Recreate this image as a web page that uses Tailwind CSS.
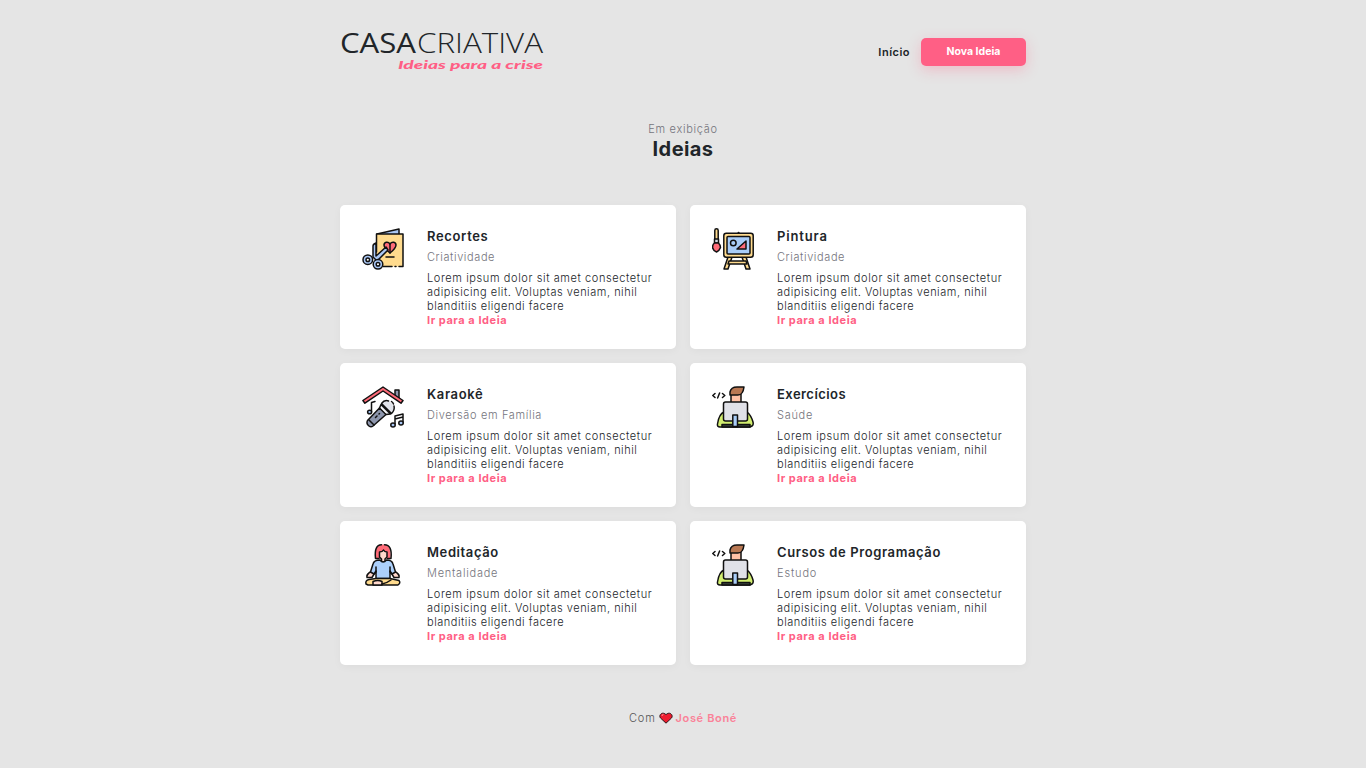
<!DOCTYPE html>
<html lang="pt-BR">
<head>
<meta charset="utf-8">
<title>Casa Criativa</title>
<script src="https://cdn.jsdelivr.net/npm/@tailwindcss/browser@4"></script>
</head>
<body class="h-screen overflow-hidden bg-[#e5e5e5] font-['Inter',sans-serif] text-[11px] leading-[14px] text-[#212529]">
<svg class="hidden">
  <defs>
    <symbol id="recortes" viewBox="0 0 42 42">
      <g stroke="#111" stroke-width="1.5" stroke-linejoin="round" stroke-linecap="round">
        <path fill="#a9c7f5" d="M15 6 37 1v6"/>
        <path fill="#ffdb8e" stroke="none" d="M14.500 6h26.500v32.500H14.500z"/>
        <path fill="none" d="M14.500 24V6H41v32.500h-4m-3 0h-1m-3 0H21"/>
        <path fill="#ff6b78" d="M28 25c-5-4-6-6-6-8 0-3 4-4 6-1 2-3 6-2 6 1 0 2-1 4-6 8z"/>
        <path d="M28 16v9M24 29h8"/>
        <path fill="#a9c7f5" d="M14 32 11 29V18q0-2 3-3v13l10-9 2 3-12 12z"/>
        <circle cx="5.800" cy="31.700" r="4.800" fill="#a9c7f5"/><circle cx="5.800" cy="31.700" r="1.800" fill="#fff"/>
        <circle cx="16" cy="36.300" r="4.800" fill="#a9c7f5"/><circle cx="16" cy="36.300" r="1.800" fill="#fff"/>
      </g>
    </symbol>
    <symbol id="pintura" viewBox="0 0 42 42">
      <g stroke="#111" stroke-width="1.500" stroke-linejoin="round" stroke-linecap="round">
        <path fill="#ffdb8e" d="M2.800 13V2.500a1.700 1.700 0 0 1 3.400 0V13z"/>
        <path fill="#d8dce6" d="M2.500 11h4v4h-4z"/>
        <path fill="#ff6b78" d="M2.500 15h4q2 2 2 4.500-1 3-4 4.500-3-1-4-4.500 0-3 2-4.500z"/>
        <path fill="#ffdb8e" d="M16 29l-4 12h4l4-12m14 0 4 12h-4l-4-12"/>
        <path fill="#ffdb8e" d="M17 33h17l1 3H16z"/>
        <rect x="11.800" y="5.300" width="29.400" height="24" rx="2.500" fill="#ffdb8e"/>
        <path d="M26.500 4.800h.1" stroke-width="2"/>
        <rect x="15" y="8.500" width="23" height="17.500" rx="1" fill="#a9cdf8"/>
        <circle cx="21.300" cy="15" r="2.800" fill="#a9cdf8"/>
        <path fill="#ff6b78" d="M25 21h9v-8z"/>
      </g>
    </symbol>
    <symbol id="karaoke" viewBox="0 0 42 42">
      <g stroke="#111" stroke-width="1.500" stroke-linejoin="round" stroke-linecap="round">
        <path fill="#8d96ad" d="M33 11V4h4v10z"/>
        <path fill="#ff6b78" d="M21 1 .9 14.500l2 2.700L21 5l18 12.200 2-2.700z"/>
        <path fill="#8d96ad" d="m17.500 22 6.500 6.500L11 40q-2 1.500-4 0l-1.500-1.500q-1-2 0-4z"/>
        <path fill="none" d="m7 34 5 5"/>
        <path d="m13.500 31.500 1.500-1.500m2-2 .5-.5"/>
        <path fill="#e1e3ea" stroke="none" d="M18.500 20q1.500-5 7-5 5 1 6 7-.5 5-5 6.500z"/>
        <path fill="none" d="M17.500 22 19 18.500l9.500 9.500-4.500.5M19.500 17.500q3-4 7-2.500M32 20q1 4-2.500 7.500l-9.500-9.500M29.500 15.500q1.500 1 2 2.500M9.500 26v-9.500l3.500-1"/>
        <ellipse cx="7.600" cy="26" rx="2" ry="1.800" fill="#a9c7f5"/>
        <path fill="none" d="M33 38v-8l8-2v9m-8-4 8-2"/>
        <ellipse cx="31" cy="39" rx="2.200" ry="2" fill="#a9c7f5"/><ellipse cx="39" cy="37" rx="2.200" ry="2" fill="#a9c7f5"/>
      </g>
    </symbol>
    <symbol id="codigo" viewBox="0 0 42 42">
      <g stroke="#111" stroke-width="1.500" stroke-linejoin="round" stroke-linecap="round">
        <path fill="none" d="M3 7.500.8 9.500 3 11.500M10.500 7.500l2.300 2-2.300 2M7.600 7l-2 5"/>
        <path fill="#d2ee70" d="M12 26q-5 2-6.500 12Q5 41 8 41h30q4-1 3-5-2-7-6-10z"/>
        <path fill="#39433b" d="M10 38.500h28V41H10z"/>
        <path fill="#ffc1a6" d="M19 7h10v10H19z"/>
        <path fill="#b97853" d="M18 9V6q1-5 7-5h7q-1 8-6 8z"/>
        <rect x="11.500" y="16" width="24" height="19" rx="2" fill="#e0e1e8"/>
        <path fill="#a9cdf8" d="M20.800 29h4.700v11.500h-4.700z"/>
      </g>
    </symbol>
    <symbol id="meditacao" viewBox="0 0 42 42">
      <g stroke="#111" stroke-width="1.500" stroke-linejoin="round" stroke-linecap="round">
        <path fill="#ff6b78" stroke="none" d="M14 14.500q-2-14 7-14t7.500 14H14z"/>
        <path fill="none" d="M17 14.500h-3.500Q12 1 19.500.8m3 0Q30.500 1 29 14.500h-3.500"/>
        <path fill="#ffd8cc" d="M17.500 8q3 0 4-2 1 2 3.500 2v5l-2 2v3h-3.500v-3l-2-2z"/>
        <path fill="#ffd8cc" d="M9 27.500q-5 3-4 6h5l3-5m20-1q5 3 4 6h-5l-3-5"/>
        <path fill="#acd0fb" d="M18 16q3 4 6.500 0 5.500 0 6.500 4l2.500 8-3.500 2-2-3v7.500H14V27l-2 3-3.500-2 2.500-8q1-4 7-4z"/>
        <path fill="none" d="M14 23v5m14-5v5"/>
        <path fill="#ffdb8e" d="M14 34.500 7 35.500q-4 1-3 4.500l2 1h30q3-2 1-4.500l-9-2z"/>
        <path fill="#ffd8cc" d="M11 37.500q5-2 9 0V41h-9z"/>
        <path fill="none" d="M20 40q5-1 9-4"/>
      </g>
    </symbol>
  </defs>
</svg>
<div class="mx-auto flex w-[686px] flex-col">
  <header class="flex h-[104px] justify-between">
    <svg class="mt-[20px] h-[60px] w-[212px]" viewBox="0 -8 212 60">
      <text x="0" y="25" font-family="Open Sans" font-size="27" font-weight="500" fill="#212529" textLength="76" lengthAdjust="spacingAndGlyphs">CASA</text>
      <text x="77" y="25" font-family="Open Sans" font-size="27" font-weight="300" fill="#212529" textLength="126" lengthAdjust="spacingAndGlyphs">CRIATIVA</text>
      <text x="58" y="41" font-family="Lato" font-size="12" font-style="italic" font-weight="900" fill="#ff5f85" textLength="145" lengthAdjust="spacingAndGlyphs">Ideias para a crise</text>
    </svg>
    <nav class="mt-[38px] flex h-7 items-center gap-[11px] font-semibold">
      <a class="tracking-[0.5px]">Início</a>
      <a class="flex h-7 w-[105px] items-center justify-center rounded-[5px] bg-[#ff5f85] pb-px text-[10.500px] font-bold text-white shadow-[0_4px_14px_rgba(255,95,133,0.3)]">Nova Ideia</a>
    </nav>
  </header>
  <section class="mt-[18px] h-[83px] text-center">
    <p class="font-light tracking-[0.7px] text-[#74747c]">Em exibição</p>
    <h1 class="text-[20px] leading-[26px] font-bold tracking-[0.4px]">Ideias</h1>
  </section>
  <main id="cards" class="grid grid-cols-2 gap-[14px]"></main>
  <footer class="mt-[46px] flex h-[14px] justify-center gap-[3px]">
    <span class="font-light tracking-[0.8px] text-[#555]">Com</span>
    <svg class="mt-px h-3 w-[14px]" viewBox="0 0 14 12"><path d="M7 11.200 1.500 6C-.8 3 3.500-1 7 2.700 10.500-1 14.800 3 12.500 6z" fill="#ee1c2e" stroke="#27171a" stroke-width="1"/><path d="M3 4q0-1.500 1.500-1.700" fill="none" stroke="#ff8d96"/></svg>
    <span class="font-semibold tracking-[0.65px] text-[#fa8298]">José Boné</span>
  </footer>
</div>
<script>
const ideas = [
  ['recortes', 'Recortes', 'Criatividade', 'tracking-[0.65px]', 'tracking-[0.6px]'],
  ['pintura', 'Pintura', 'Criatividade', 'tracking-[0.85px]', 'tracking-[0.6px]'],
  ['karaoke', 'Karaokê', 'Diversão em Família', 'tracking-[0.65px]', 'tracking-[0.65px]'],
  ['codigo', 'Exercícios', 'Saúde', 'tracking-[0.45px]', 'tracking-[0.7px]'],
  ['meditacao', 'Meditação', 'Mentalidade', 'tracking-[0.6px]', 'tracking-[0.75px]'],
  ['codigo', 'Cursos de Programação', 'Estudo', 'tracking-[0.6px]', 'tracking-[0.85px]']
];
document.getElementById('cards').innerHTML = ideas.map(([icon, title, category, titleSpacing, categorySpacing]) => `
<article class="flex h-[144px] gap-[23px] rounded-[5px] bg-white pt-[22px] pl-[22px] shadow-[0_2px_8px_rgba(0,0,0,0.04)]">
  <svg class="mt-px size-[42px] shrink-0"><use href="#${icon}"/></svg>
  <div class="whitespace-nowrap">
    <h2 class="text-[13px] leading-[18px] font-semibold ${titleSpacing}">${title}</h2>
    <h3 class="mt-[5px] font-light text-[#74747c] ${categorySpacing}">${category}</h3>
    <p class="mt-[7px] font-light tracking-[0.52px]"><span class="block tracking-[0.6px]">Lorem ipsum dolor sit amet consectetur</span><span class="block">adipisicing elit. Voluptas veniam, nihil</span><span class="block">blanditiis eligendi facere</span></p>
    <a class="block font-bold tracking-[0.55px] text-[#ff5f85]">Ir para a Ideia</a>
  </div>
</article>`).join('');
</script>
</body>
</html>
